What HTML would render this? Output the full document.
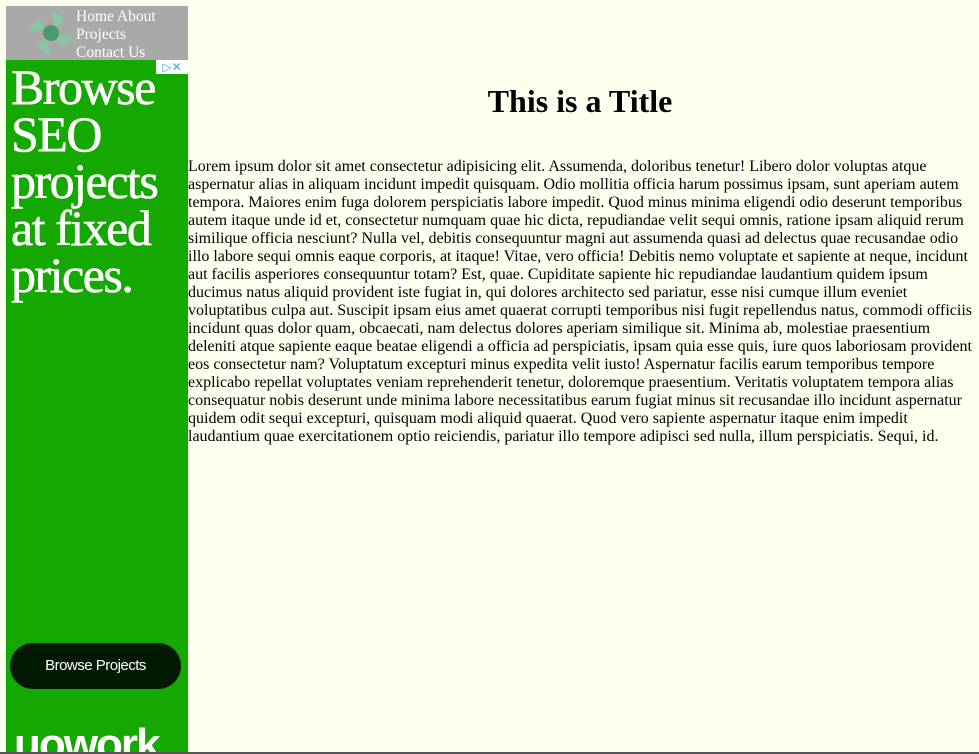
<!DOCTYPE html>
<html><head><style>
html,body{margin:0;padding:0;background:#fffff0;width:979px;height:754px;overflow:hidden;font-family:"Liberation Serif",serif;}
.side{position:absolute;left:6px;top:6px;width:182px;}
.nav{background:#a9a9a9;height:54px;position:relative;}
.nav .links{position:absolute;left:70px;top:2px;color:#fff;font-size:15.5px;line-height:18px;width:110px;}
.ad{position:absolute;left:6px;top:60px;width:182px;height:694px;background:#14a800;overflow:hidden;}
.ad .big{position:absolute;left:5px;top:4px;color:#fff;font-size:50px;line-height:47px;letter-spacing:-1.5px;-webkit-text-stroke:0.6px #fff;}
.btn{position:absolute;left:4px;top:583px;width:171px;height:46px;border-radius:23px;background:#021a02;color:#fff;font-family:"Liberation Sans",sans-serif;font-size:15px;line-height:46px;text-align:center;letter-spacing:-0.5px;}
.logo{position:absolute;left:8px;top:660px;color:#fff;font-family:"Liberation Sans",sans-serif;font-weight:bold;font-size:44px;letter-spacing:-2px;}
.main{position:absolute;left:188px;top:0;width:791px;}
h1{text-align:center;font-size:32px;margin:0;position:absolute;top:83px;width:784px;}
p{position:absolute;top:158px;margin:0;font-size:16px;line-height:18px;width:786px;}
.bar{position:absolute;left:0;top:752px;width:979px;height:2px;background:#555;}
</style></head><body>
<div class="side"><div class="nav">
<svg width="50" height="50" viewBox="0 0 50 50" style="position:absolute;left:20px;top:2px">
<g fill="#7fcfa0" opacity="0.85">
<path d="M25 4c8 0 12 6 12 10l-8 6c0-6-2-12-4-16z"/>
<path d="M46 25c0 8-6 12-10 12l-6-8c6 0 12-2 16-4z"/>
<path d="M25 46c-8 0-12-6-12-10l8-6c0 6 2 12 4 16z"/>
<path d="M4 25c0-8 6-12 10-12l6 8c-6 0-12 2-16 4z"/>
</g><circle cx="25" cy="25" r="8" fill="#4a9a70"/></svg>
<div class="links">Home About<br>Projects<br>Contact Us</div></div></div>
<div class="ad"><div class="big">Browse<br>SEO<br>projects<br>at fixed<br>prices.</div>
<div style="position:absolute;right:0;top:0;width:32px;height:14px;background:#fff;color:#4aa0e0;font:12px sans-serif;line-height:14px;text-align:center">▷✕</div>
<div class="btn">Browse Projects</div><div class="logo">uowork</div></div>
<div class="main"><h1>This is a Title</h1>
<p>Lorem ipsum dolor sit amet consectetur adipisicing elit. Assumenda, doloribus tenetur! Libero dolor voluptas atque aspernatur alias in aliquam incidunt impedit quisquam. Odio mollitia officia harum possimus ipsam, sunt aperiam autem tempora. Maiores enim fuga dolorem perspiciatis labore impedit. Quod minus minima eligendi odio deserunt temporibus autem itaque unde id et, consectetur numquam quae hic dicta, repudiandae velit sequi omnis, ratione ipsam aliquid rerum similique officia nesciunt? Nulla vel, debitis consequuntur magni aut assumenda quasi ad delectus quae recusandae odio illo labore sequi omnis eaque corporis, at itaque! Vitae, vero officia! Debitis nemo voluptate et sapiente at neque, incidunt aut facilis asperiores consequuntur totam? Est, quae. Cupiditate sapiente hic repudiandae laudantium quidem ipsum ducimus natus aliquid provident iste fugiat in, qui dolores architecto sed pariatur, esse nisi cumque illum eveniet voluptatibus culpa aut. Suscipit ipsam eius amet quaerat corrupti temporibus nisi fugit repellendus natus, commodi officiis incidunt quas dolor quam, obcaecati, nam delectus dolores aperiam similique sit. Minima ab, molestiae praesentium deleniti atque sapiente eaque beatae eligendi a officia ad perspiciatis, ipsam quia esse quis, iure quos laboriosam provident eos consectetur nam? Voluptatum excepturi minus expedita velit iusto! Aspernatur facilis earum temporibus tempore explicabo repellat voluptates veniam reprehenderit tenetur, doloremque praesentium. Veritatis voluptatem tempora alias consequatur nobis deserunt unde minima labore necessitatibus earum fugiat minus sit recusandae illo incidunt aspernatur quidem odit sequi excepturi, quisquam modi aliquid quaerat. Quod vero sapiente aspernatur itaque enim impedit laudantium quae exercitationem optio reiciendis, pariatur illo tempore adipisci sed nulla, illum perspiciatis. Sequi, id.</p></div>
<div class="bar"></div>
</body></html>
